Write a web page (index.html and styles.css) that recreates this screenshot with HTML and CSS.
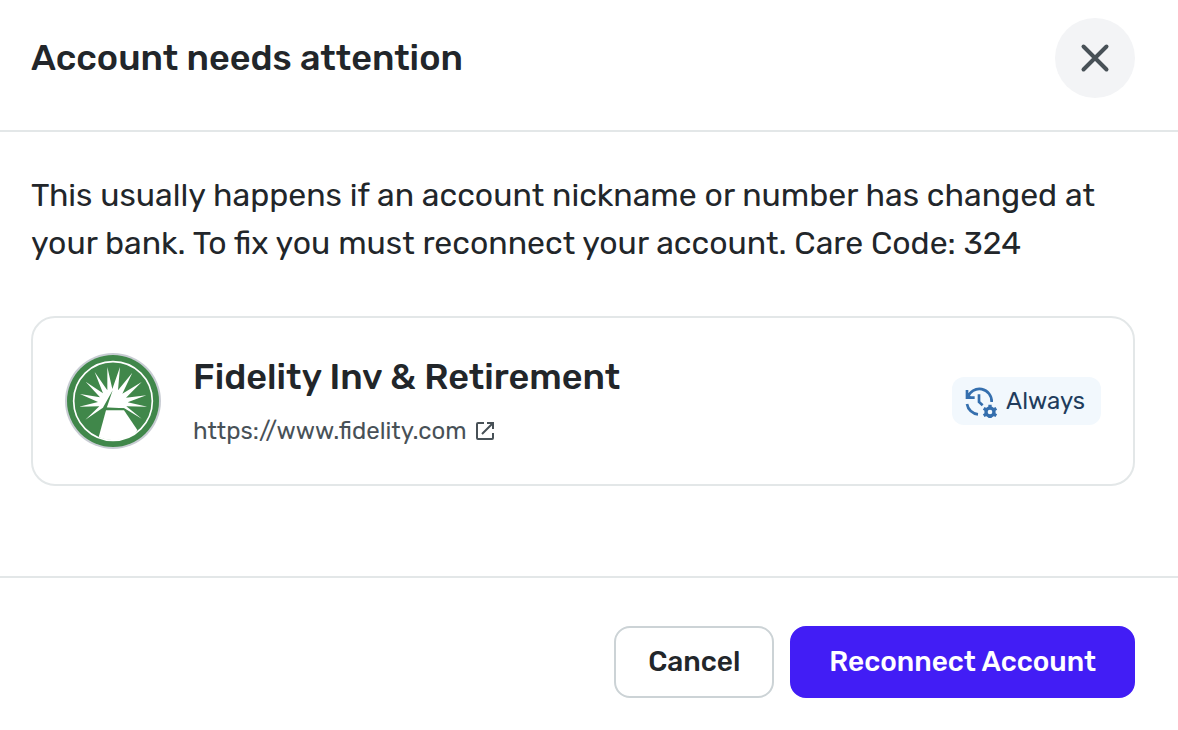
FILE: index.html
```html
<!DOCTYPE html>
<html lang="en">
<head>
    <meta charset="UTF-8">
    <meta name="viewport" content="width=device-width, initial-scale=1.0">
    <title>Account needs attention</title>
    <link rel="stylesheet" href="styles.css">
</head>
<body>

    <main class="modal">
        <header class="modal-header">
            <h1>Account needs attention</h1>
            <button type="button" class="close" aria-label="Close">
                <svg viewBox="0 0 32 32" width="32" height="32">
                    <path d="M4.5 4.5l23 23M27.5 4.5l-23 23" fill="none" stroke="currentColor" stroke-width="4" stroke-linecap="round"/>
                </svg>
            </button>
        </header>

        <section class="modal-body">
            <p>This usually happens if an account nickname or number has changed at your bank. To fix you must reconnect your account. Care Code: 324</p>

            <div class="account">
                <svg class="logo" viewBox="15 24 288 288" role="img" aria-label="Fidelity">
                    <circle cx="159" cy="168" r="144" fill="#c8ccd3"/>
                    <circle cx="159" cy="168" r="138" fill="#40874a"/>
                    <circle cx="159" cy="168" r="118" fill="none" stroke="#fff" stroke-width="5"/>
                    <!-- sun rays -->
                    <path fill="#fff" d="M131 187L76 224L118 184L57 185L114 171L60 147L120 157L77 110L129 145L104 81L142 136L142 66L157 132L180 66L174 136L217 83L187 146L245 111L198 158L259 151L203 172L262 185L199 184L245 221L193 190z"/>
                    <!-- pyramid -->
                    <path fill="#40874a" d="M158 136L130 186L137 198L141 186z"/>
                    <path fill="#40874a" d="M130 186L141 190H192V197H132z"/>
                    <path fill="#fff" d="M138 196H192L232 255L225 266A118 118 0 0 1 116 277z"/>
                </svg>
                <div class="account-info">
                    <h2>Fidelity Inv &amp; Retirement</h2>
                    <a href="https://www.fidelity.com">https://www.fidelity.com
                        <svg viewBox="0 0 20 20" width="20" height="20">
                            <path d="M9 2H3Q2 2 2 3V17Q2 18 3 18H17Q18 18 18 17V12M12 2H18V8M18 2L7 13" fill="none" stroke="currentColor" stroke-width="2"/>
                        </svg>
                    </a>
                </div>
                <span class="badge">
                    <svg viewBox="18 12 102 102" width="34" height="34">
                        <g fill="none" stroke="currentColor" stroke-width="8">
                            <path d="M27 30V53H50M29 52A37 37 0 0 1 101 66M27 72A37 37 0 0 0 60 103M63 43V66L74 76"/>
                            <path d="M24 36L46 57H24z" fill="currentColor" stroke="none"/>
                            <circle cx="96" cy="96" r="12" stroke-width="10"/>
                            <path d="M96 74V84M96 108V118M77 85L86 90M106 102L115 107M115 85L106 90M86 102L77 107" stroke-width="10"/>
                        </g>
                    </svg>
                    Always
                </span>
            </div>
        </section>

        <footer class="modal-footer">
            <button type="button" class="btn">Cancel</button>
            <button type="button" class="btn btn-primary">Reconnect Account</button>
        </footer>
    </main>

</body>
</html>
```
FILE: styles.css
```css
* {
    margin: 0;
    padding: 0;
    box-sizing: border-box;
}

body {
    font-family: Rubik, Inter, sans-serif;
    background: #fff;
    color: #22262a;
}

.modal-header {
    display: flex;
    justify-content: space-between;
    align-items: center;
    padding: 18px 43px 32px 31px;
    border-bottom: 2px solid #e3e7e8;
}

h1, h2 {
    font-size: 36px;
    line-height: 48px;
    font-weight: 500;
}

.close {
    display: flex;
    justify-content: center;
    align-items: center;
    width: 80px;
    height: 80px;
    border: none;
    border-radius: 50%;
    background: #f3f4f6;
    color: #485157;
    cursor: pointer;
}

.modal-body {
    padding: 39px 43px 90px 31px;
}

.modal-body p {
    font-size: 32px;
    line-height: 48px;
    margin-bottom: 49px;
}

.account {
    display: flex;
    align-items: center;
    gap: 32px;
    padding: 35px 32px;
    border: 2px solid #e3e7e8;
    border-radius: 24px;
}

.logo {
    width: 96px;
    height: 96px;
}

.account-info {
    flex: 1;
}

.account-info a {
    display: flex;
    align-items: center;
    gap: 8px;
    margin-top: 12px;
    font-size: 24px;
    line-height: 36px;
    color: #485157;
    text-decoration: none;
}

.badge {
    display: flex;
    align-items: center;
    gap: 8px;
    height: 48px;
    padding: 0 16px 0 12px;
    border-radius: 12px;
    background: #f2f8fd;
    color: #213c5c;
    font-size: 24px;
}

.badge svg {
    color: #356fae;
}

.modal-footer {
    display: flex;
    justify-content: flex-end;
    gap: 16px;
    padding: 48px 43px 32px;
    border-top: 2px solid #e3e7e8;
}

.btn {
    height: 72px;
    padding: 0 32px 2px;
    border: 2px solid #ccd3d6;
    border-radius: 16px;
    background: #fff;
    color: #22262a;
    font-family: inherit;
    font-size: 28px;
    font-weight: 500;
    cursor: pointer;
}

.btn-primary {
    padding: 0 37px 2px;
    border-color: #421df5;
    background: #421df5;
    color: #fff;
}
```
